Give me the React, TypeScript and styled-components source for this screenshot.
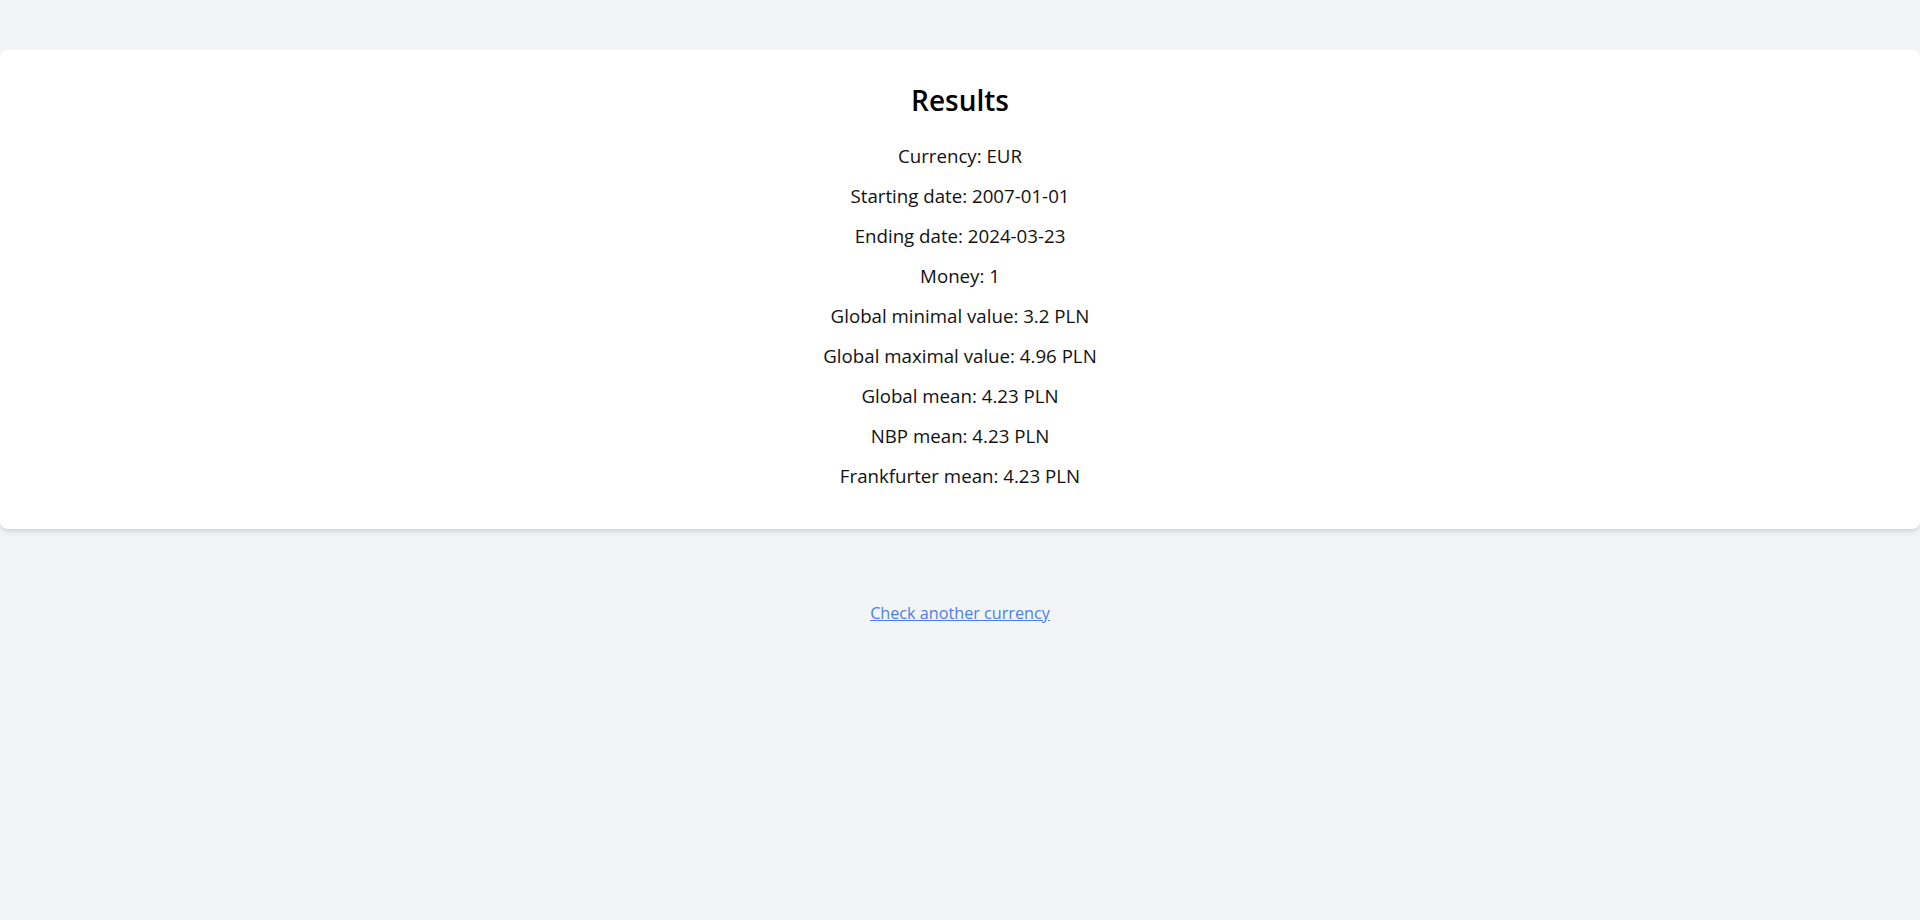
import React from "react";
import styled, { createGlobalStyle } from "styled-components";

const Global = createGlobalStyle`
  html, body { margin: 0; padding: 0; background: #f3f4f6; }
  body { font-family: "Segoe UI", "Open Sans", "Noto Sans", sans-serif; color: #000; }
`;

const Page = styled.main`
  min-height: 920px;
  background: #f3f4f6;
  padding-top: 50px;
  box-sizing: border-box;
  display: flex;
  flex-direction: column;
  align-items: center;
`;

const Card = styled.section`
  width: 100%;
  box-sizing: border-box;
  background: #fff;
  border-radius: 8px;
  box-shadow: 0 4px 6px -1px rgba(0,0,0,0.1), 0 2px 4px -2px rgba(0,0,0,0.1);
  padding: 32px 24px 39px;
  display: flex;
  flex-direction: column;
  align-items: center;
`;

const Title = styled.h2`
  margin: 0 0 24px;
  font-size: 28px;
  line-height: 36px;
  font-weight: 650;
  color: #000;
`;

const List = styled.div`
  display: flex;
  flex-direction: column;
  align-items: center;
  gap: 12px;
`;

const Line = styled.p`
  margin: 0;
  font-size: 18.7px;
  line-height: 28px;
  color: #111;
`;

const Link = styled.a`
  margin-top: 72px;
  font-size: 16.2px;
  line-height: 24px;
  color: #4a7ff2;
  text-decoration: underline;
  cursor: pointer;
`;

const rows = [
  "Currency: EUR",
  "Starting date: 2007-01-01",
  "Ending date: 2024-03-23",
  "Money: 1",
  "Global minimal value: 3.2 PLN",
  "Global maximal value: 4.96 PLN",
  "Global mean: 4.23 PLN",
  "NBP mean: 4.23 PLN",
  "Frankfurter mean: 4.23 PLN",
];

export default function App() {
  return (
    <>
      <Global />
      <Page>
        <Card>
          <Title>Results</Title>
          <List>
            {rows.map((r) => (
              <Line key={r}>{r}</Line>
            ))}
          </List>
        </Card>
        <Link href="#">Check another currency</Link>
      </Page>
    </>
  );
}
